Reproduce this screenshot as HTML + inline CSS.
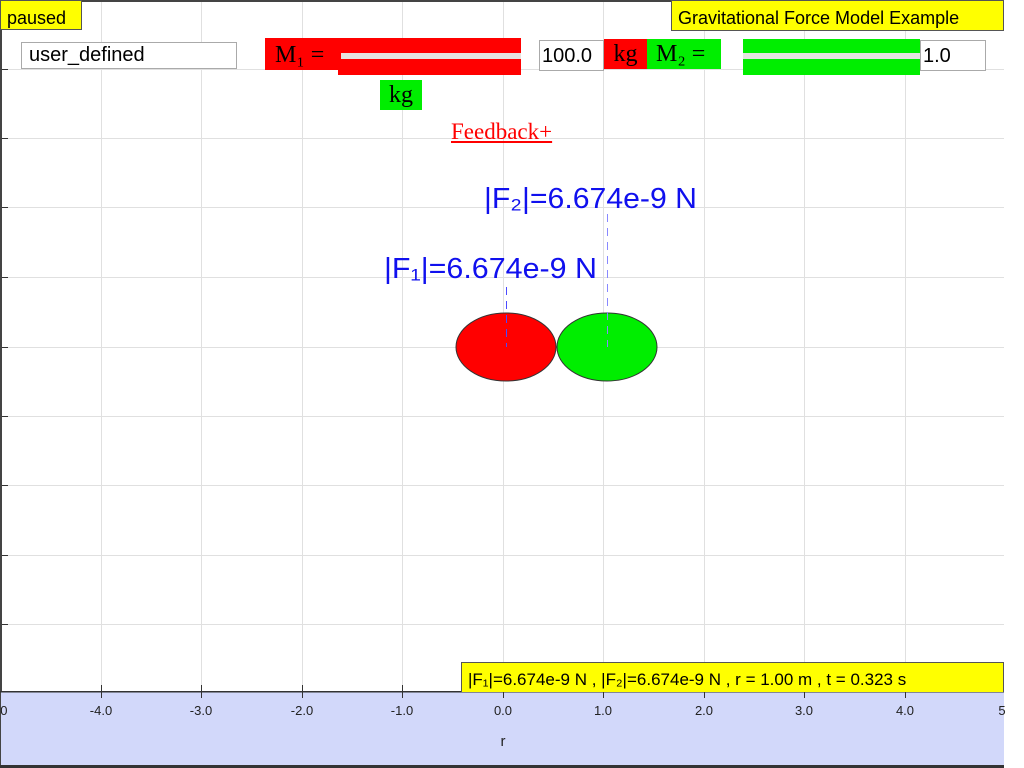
<!DOCTYPE html>
<html><head><meta charset="utf-8"><style>
body{margin:0;width:1024px;height:768px;overflow:hidden;background:#fff;font-family:"Liberation Sans",sans-serif;position:relative}
.a{position:absolute}
.ser{font-family:"Liberation Serif",serif}
</style></head><body>
<svg class="a" style="left:0;top:0" width="1024" height="768">
<g stroke="#e0e0e0" stroke-width="1">
<line x1="101.5" y1="0" x2="101.5" y2="692"/><line x1="201.5" y1="0" x2="201.5" y2="692"/><line x1="302.5" y1="0" x2="302.5" y2="692"/><line x1="402.5" y1="0" x2="402.5" y2="692"/><line x1="503.5" y1="0" x2="503.5" y2="692"/><line x1="603.5" y1="0" x2="603.5" y2="692"/><line x1="704.5" y1="0" x2="704.5" y2="692"/><line x1="804.5" y1="0" x2="804.5" y2="692"/><line x1="905.5" y1="0" x2="905.5" y2="692"/>
<line x1="0" y1="69.5" x2="1004" y2="69.5"/><line x1="0" y1="138.5" x2="1004" y2="138.5"/><line x1="0" y1="207.5" x2="1004" y2="207.5"/><line x1="0" y1="277.5" x2="1004" y2="277.5"/><line x1="0" y1="347.5" x2="1004" y2="347.5"/><line x1="0" y1="416.5" x2="1004" y2="416.5"/><line x1="0" y1="485.5" x2="1004" y2="485.5"/><line x1="0" y1="555.5" x2="1004" y2="555.5"/><line x1="0" y1="624.5" x2="1004" y2="624.5"/>
</g>
<g stroke="#333"><line x1="0" y1="69.5" x2="8" y2="69.5"/><line x1="0" y1="138.5" x2="8" y2="138.5"/><line x1="0" y1="207.5" x2="8" y2="207.5"/><line x1="0" y1="277.5" x2="8" y2="277.5"/><line x1="0" y1="347.5" x2="8" y2="347.5"/><line x1="0" y1="416.5" x2="8" y2="416.5"/><line x1="0" y1="485.5" x2="8" y2="485.5"/><line x1="0" y1="555.5" x2="8" y2="555.5"/><line x1="0" y1="624.5" x2="8" y2="624.5"/></g>
<rect x="0" y="0" width="1004" height="2" fill="#444"/>
<rect x="0" y="0" width="2" height="768" fill="#444"/>
<rect x="1" y="692" width="1003" height="73" fill="#d2d8fa"/>
<rect x="0" y="691" width="1004" height="1.5" fill="#333"/>
<rect x="0" y="765" width="1004" height="3" fill="#333"/>
<g stroke="#333"><line x1="101.5" y1="685" x2="101.5" y2="698"/><line x1="201.5" y1="685" x2="201.5" y2="698"/><line x1="302.5" y1="685" x2="302.5" y2="698"/><line x1="402.5" y1="685" x2="402.5" y2="698"/><line x1="503.5" y1="685" x2="503.5" y2="698"/><line x1="603.5" y1="685" x2="603.5" y2="698"/><line x1="704.5" y1="685" x2="704.5" y2="698"/><line x1="804.5" y1="685" x2="804.5" y2="698"/><line x1="905.5" y1="685" x2="905.5" y2="698"/></g>
<g font-family="Liberation Sans" font-size="13" fill="#222" text-anchor="middle">
<text x="2" y="715">.0</text><text x="101" y="715">-4.0</text><text x="201" y="715">-3.0</text><text x="302" y="715">-2.0</text><text x="402" y="715">-1.0</text><text x="503" y="715">0.0</text><text x="603" y="715">1.0</text><text x="704" y="715">2.0</text><text x="804" y="715">3.0</text><text x="905" y="715">4.0</text><text x="1002" y="715">5</text>
<text x="503" y="746" font-size="15">r</text></g>
<ellipse cx="506" cy="347" rx="50" ry="34" fill="#ff0000" stroke="#333"/>
<ellipse cx="607" cy="347" rx="50" ry="34" fill="#00ee00" stroke="#333"/>
<line x1="506.5" y1="287" x2="506.5" y2="347" stroke="#4a4aff" stroke-dasharray="8,6"/>
<line x1="607.5" y1="214" x2="607.5" y2="347" stroke="#8888ff" stroke-dasharray="8,6"/>
<text x="384" y="278" font-family="Liberation Sans" font-size="29" fill="#1010ee" textLength="213" lengthAdjust="spacingAndGlyphs">|F₁|=6.674e-9 N</text>
<text x="484" y="208" font-family="Liberation Sans" font-size="29" fill="#1010ee" textLength="213" lengthAdjust="spacingAndGlyphs">|F₂|=6.674e-9 N</text>
</svg>
<div class="a" style="left:0;top:0;width:82px;height:30px;background:#ff0;border:1px solid #555;box-sizing:border-box;font-size:18px;padding:7px 0 0 6px;line-height:20px">paused</div>
<div class="a" style="left:671px;top:0;width:333px;height:31px;background:#ff0;border:1px solid #555;box-sizing:border-box;font-size:18px;padding:7px 0 0 6px;line-height:20px">Gravitational Force Model Example</div>
<div class="a" style="left:21px;top:42px;width:216px;height:27px;border:1px solid #aaa;box-sizing:border-box;font-size:20px;padding:0 0 0 7px;line-height:24px;background:#fff">user_defined</div>
<div class="a ser" style="left:265px;top:38px;width:73px;height:32px;background:#f00;font-size:24px;line-height:34px;padding-left:10px;box-sizing:border-box">M₁ =</div>
<div class="a" style="left:338px;top:38px;width:183px;height:37px;background:#f00"></div>
<div class="a" style="left:341px;top:53px;width:180px;height:6px;background:#e6e4e0"></div>
<div class="a" style="left:539px;top:40px;width:65px;height:31px;border:1px solid #aaa;box-sizing:border-box;font-size:20px;padding:3px 0 0 2px;line-height:24px;background:#fff">100.0</div>
<div class="a ser" style="left:604px;top:39px;width:43px;height:30px;background:#f00;font-size:24px;line-height:30px;text-align:center">kg</div>
<div class="a ser" style="left:647px;top:39px;width:74px;height:30px;background:#00ee00;font-size:24px;line-height:30px;padding-left:9px;box-sizing:border-box">M₂ =</div>
<div class="a" style="left:743px;top:39px;width:177px;height:36px;background:#00ee00"></div>
<div class="a" style="left:743px;top:53px;width:177px;height:6px;background:#e6e4e0"></div>
<div class="a" style="left:920px;top:40px;width:66px;height:31px;border:1px solid #aaa;box-sizing:border-box;font-size:20px;padding:3px 0 0 2px;line-height:24px;background:#fff">1.0</div>
<div class="a ser" style="left:380px;top:80px;width:42px;height:30px;background:#00ee00;font-size:24px;line-height:30px;text-align:center">kg</div>
<div class="a ser" style="left:451px;top:119px;font-size:23px;color:#f00;text-decoration:underline">Feedback+</div>
<div class="a" style="left:461px;top:662px;width:543px;height:30px;background:#ff0;border:1px solid #555;border-bottom:none;box-sizing:border-box;font-size:17px;padding:7px 0 0 6px;line-height:19px;white-space:nowrap">|F₁|=6.674e-9 N , |F₂|=6.674e-9 N , r = 1.00 m , t = 0.323 s</div>
</body></html>
